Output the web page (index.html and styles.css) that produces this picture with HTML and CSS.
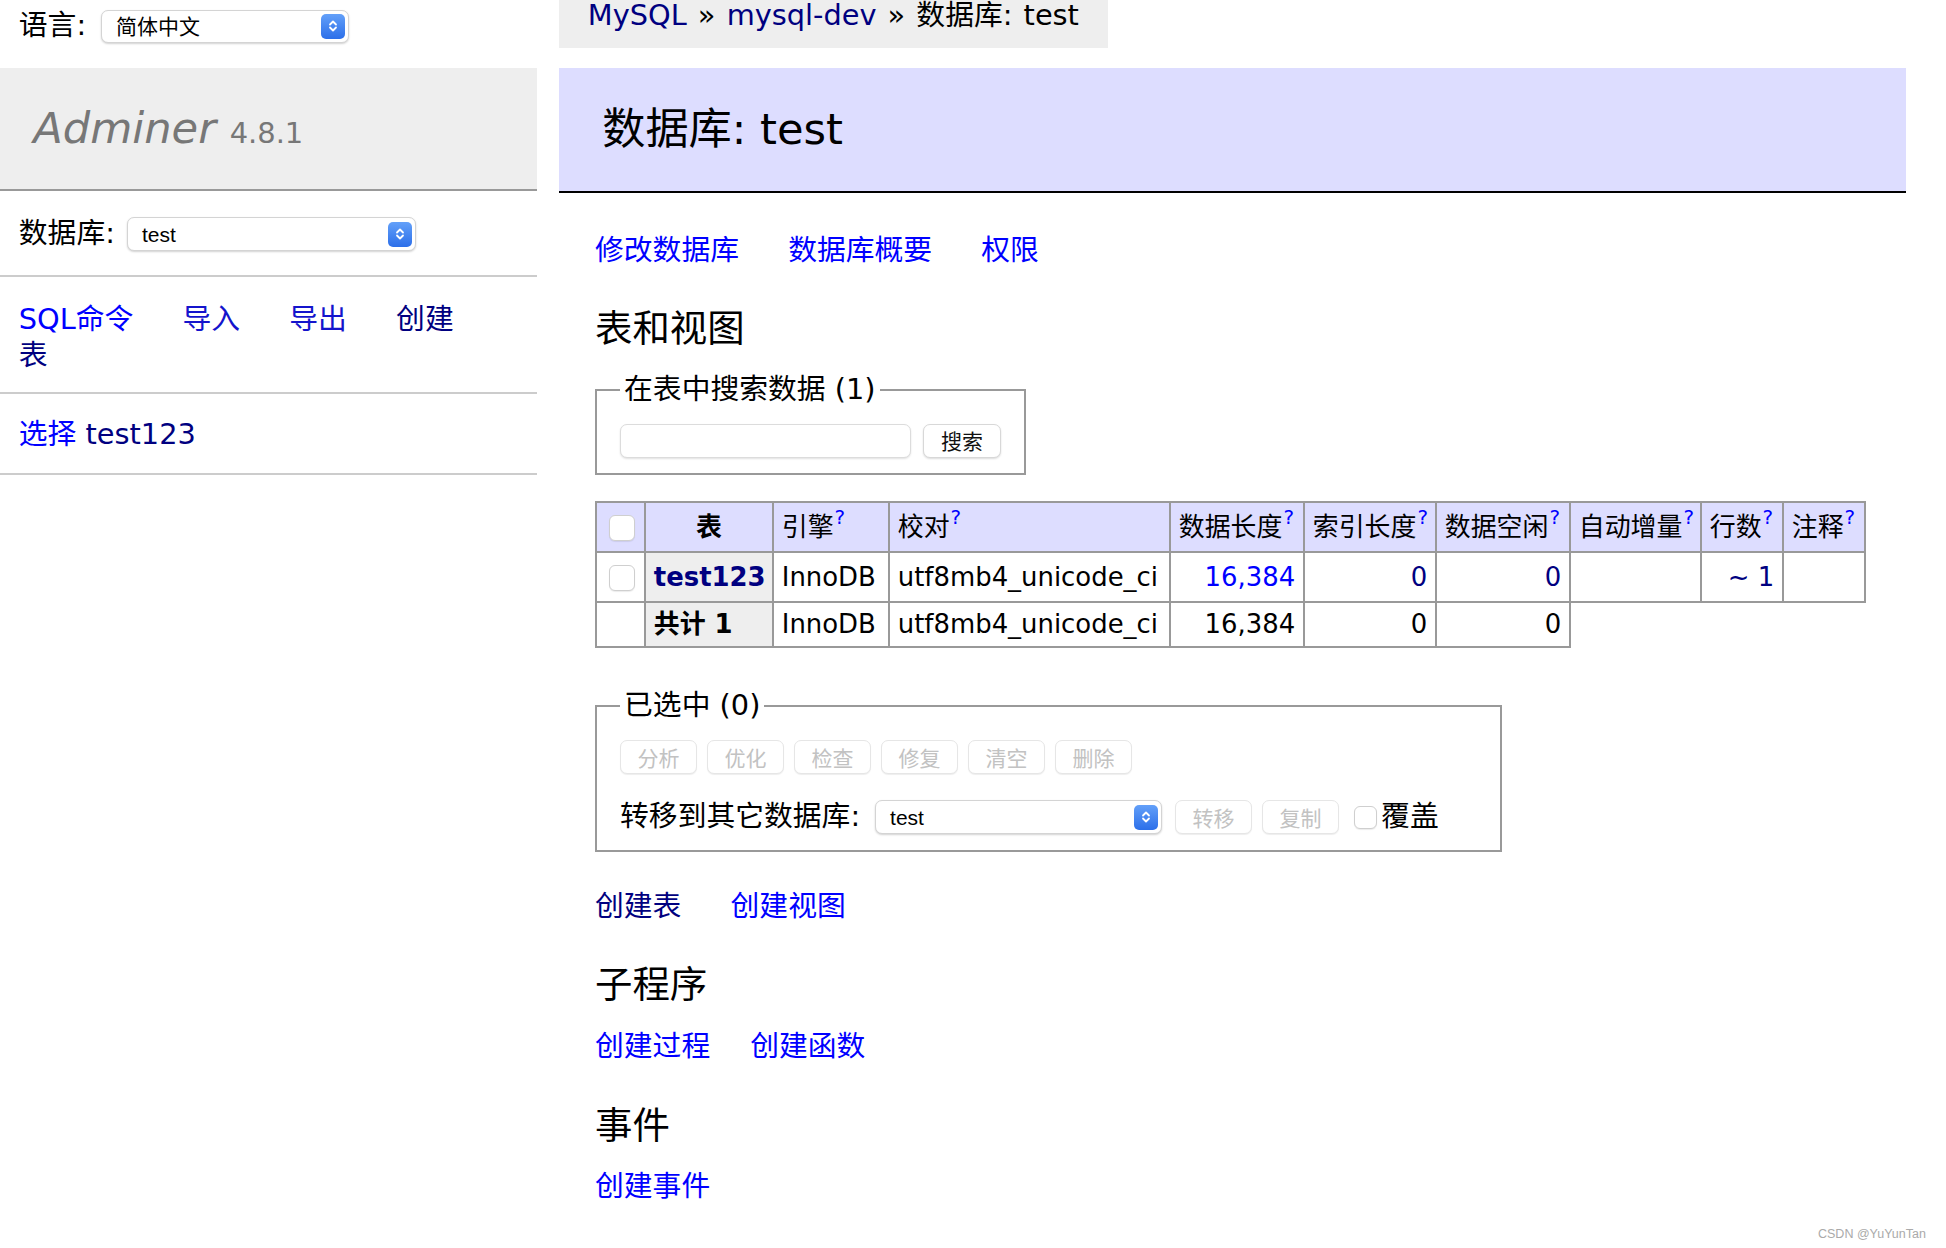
FILE: index.html
```html
<!DOCTYPE html>
<html lang="zh-CN">
<head>
<meta charset="utf-8">
<title>数据库: test - Adminer</title>
<link rel="stylesheet" href="styles.css">
</head>
<body>
<div class="page">
  <aside class="sidebar">
    <div class="lang">
      <span>语言:</span>
      <span class="select sel-lang"><span class="sel-text">简体中文</span><span class="sel-btn"><svg viewBox="0 0 12 16" width="12" height="16"><path d="M3 6.5 6 3.5 9 6.5M3 9.5 6 12.5 9 9.5" fill="none" stroke="#fff" stroke-width="1.8" stroke-linecap="round" stroke-linejoin="round"/></svg></span></span>
    </div>
    <h1><a class="logo" href="#">Adminer</a> <span class="version">4.8.1</span></h1>
    <p class="dbs">
      <span>数据库:</span>
      <span class="select sel-db"><span class="sel-text">test</span><span class="sel-btn"><svg viewBox="0 0 12 16" width="12" height="16"><path d="M3 6.5 6 3.5 9 6.5M3 9.5 6 12.5 9 9.5" fill="none" stroke="#fff" stroke-width="1.8" stroke-linecap="round" stroke-linejoin="round"/></svg></span></span>
    </p>
    <p class="menu-links"><a href="#">SQL命令</a> <a href="#" class="mid">导入</a> <a href="#" class="mid">导出</a> <a href="#" class="v">创建表</a></p>
    <ul class="tables"><li><a href="#">选择</a> <a href="#" class="v">test123</a></li></ul>
  </aside>

  <main class="main">
    <div class="crumbs"><div class="breadcrumb"><a href="#" class="v">MySQL</a> » <a href="#" class="v">mysql-dev</a> » 数据库: test</div></div>
    <h2>数据库: test</h2>
    <div class="content">
      <p class="links"><a href="#">修改数据库</a> <a href="#">数据库概要</a> <a href="#">权限</a></p>
      <h3>表和视图</h3>
      <form class="search-form">
        <fieldset class="search-set">
          <legend>在表中搜索数据 (1)</legend>
          <div class="search-row"><input type="search" class="search-input"><button type="button" class="btn">搜索</button></div>
        </fieldset>
      </form>

      <table class="tbl">
        <colgroup>
          <col style="width:49px"><col style="width:128px"><col style="width:116px"><col style="width:281px"><col style="width:134px"><col style="width:132px"><col style="width:134px"><col style="width:131px"><col style="width:82px"><col style="width:82px">
        </colgroup>
        <thead>
          <tr>
            <td><input type="checkbox" class="cb"></td>
            <th>表</th>
            <td>引擎<a href="#"><sup>?</sup></a></td>
            <td>校对<a href="#"><sup>?</sup></a></td>
            <td>数据长度<a href="#"><sup>?</sup></a></td>
            <td>索引长度<a href="#"><sup>?</sup></a></td>
            <td>数据空闲<a href="#"><sup>?</sup></a></td>
            <td>自动增量<a href="#"><sup>?</sup></a></td>
            <td>行数<a href="#"><sup>?</sup></a></td>
            <td>注释<a href="#"><sup>?</sup></a></td>
          </tr>
        </thead>
        <tbody>
          <tr class="r1">
            <td><input type="checkbox" class="cb"></td>
            <th><a href="#" class="v">test123</a></th>
            <td>InnoDB</td>
            <td>utf8mb4_unicode_ci</td>
            <td class="num"><a href="#">16,384</a></td>
            <td class="num"><a href="#" class="v">0</a></td>
            <td class="num"><a href="#" class="v">0</a></td>
            <td class="num"></td>
            <td class="num"><a href="#" class="v">~ 1</a></td>
            <td></td>
          </tr>
          <tr class="r2">
            <td></td>
            <th>共计 1</th>
            <td>InnoDB</td>
            <td>utf8mb4_unicode_ci</td>
            <td class="num">16,384</td>
            <td class="num">0</td>
            <td class="num">0</td>
          </tr>
        </tbody>
      </table>

      <div class="footer">
        <fieldset class="sel-set">
          <legend>已选中 (0)</legend>
          <div class="btn-row">
            <button type="button" class="btn" disabled>分析</button>
            <button type="button" class="btn" disabled>优化</button>
            <button type="button" class="btn" disabled>检查</button>
            <button type="button" class="btn" disabled>修复</button>
            <button type="button" class="btn" disabled>清空</button>
            <button type="button" class="btn" disabled>删除</button>
          </div>
          <p class="move-row">
            <span>转移到其它数据库:</span>
            <span class="select sel-move"><span class="sel-text">test</span><span class="sel-btn"><svg viewBox="0 0 12 16" width="12" height="16"><path d="M3 6.5 6 3.5 9 6.5M3 9.5 6 12.5 9 9.5" fill="none" stroke="#fff" stroke-width="1.8" stroke-linecap="round" stroke-linejoin="round"/></svg></span></span>
            <button type="button" class="btn mv" disabled>转移</button>
            <button type="button" class="btn cp" disabled>复制</button>
            <label class="ow"><input type="checkbox" class="cb cb-sm">覆盖</label>
          </p>
        </fieldset>
      </div>

      <p class="links"><a href="#" class="v">创建表</a> <a href="#">创建视图</a></p>
      <h3>子程序</h3>
      <p class="links after-h3"><a href="#">创建过程</a><a href="#">创建函数</a></p>
      <h3>事件</h3>
      <p class="links after-h3"><a href="#">创建事件</a></p>
    </div>
  </main>
</div>
<div class="watermark">CSDN @YuYunTan</div>
</body>
</html>
```

FILE: styles.css
```css
html, body {
  margin: 0;
  padding: 0;
  background: #fff;
}

body {
  color: #000;
  font: 28.8px/1.25 "DejaVu Sans", "Noto Sans CJK SC", sans-serif;
  position: relative;
  min-height: 1248px;
}

a {
  color: #00f;
  text-decoration: none;
}

a.v {
  color: #000080;
}

a.mid {
  color: #1414cc;
}

.page {
  display: flex;
  align-items: flex-start;
}

/* ---------- sidebar ---------- */
.sidebar {
  width: 537px;
  flex: none;
}

.lang {
  display: flex;
  align-items: center;
  gap: 15px;
  height: 52px;
  margin-bottom: 15.6px;
  padding-left: 18.8px;
}

h1 {
  margin: 0;
  padding: 33.5px 43.2px 33.5px 33.2px;
  font-size: 43.2px;
  line-height: 1.25;
  font-weight: normal;
  color: #777;
  background: #eee;
  border-bottom: 2px solid #999;
}

.logo {
  color: #777;
  font-style: italic;
}

.version {
  color: #777;
  font-size: 67%;
}

.dbs,
.menu-links,
.tables {
  margin: 0;
  padding: 22px 28.8px 22px 18.8px;
  border-bottom: 2px solid #ccc;
}

.dbs {
  display: flex;
  align-items: center;
  gap: 12px;
  min-height: 36px;
  padding-top: 25.5px;
  padding-bottom: 23px;
}

.menu-links {
  padding-top: 25px;
  padding-bottom: 18px;
}

.menu-links a {
  margin-right: 40px;
}

.tables {
  list-style: none;
  white-space: nowrap;
  padding-top: 23px;
  padding-bottom: 20px;
}

/* ---------- selects / controls ---------- */
.select {
  display: inline-flex;
  align-items: center;
  justify-content: space-between;
  box-sizing: border-box;
  height: 34px;
  padding: 0 3px 0 14px;
  background: #fff;
  border: 1px solid #d4d4d4;
  border-radius: 7px;
  box-shadow: 0 1px 2px rgba(0, 0, 0, 0.18);
  font: 21px/1 "Liberation Sans", "Noto Sans CJK SC", sans-serif;
  color: #000;
  flex: none;
}

.sel-lang { width: 248px; height: 33px; }
.sel-db { width: 289px; }
.sel-move { width: 287px; }

.sel-btn {
  display: flex;
  align-items: center;
  justify-content: center;
  width: 24px;
  height: 25px;
  border-radius: 5px;
  background: linear-gradient(#63a0f9, #2c6fe9);
}

.btn {
  box-sizing: border-box;
  width: 77px;
  height: 34px;
  padding: 0;
  background: #fff;
  border: 1px solid #d8d8d8;
  border-radius: 7px;
  box-shadow: 0 1px 2px rgba(0, 0, 0, 0.14);
  font: 21px/1 "Noto Sans CJK SC", sans-serif;
  color: #111;
}

.btn:disabled {
  color: #c2c2c2;
  border-color: #e6e6e6;
  box-shadow: 0 1px 1px rgba(0, 0, 0, 0.07);
}

.cb {
  -webkit-appearance: none;
  appearance: none;
  box-sizing: border-box;
  width: 26px;
  height: 26px;
  margin: 0 0 0 4px;
  background: #fff;
  border: 1px solid #cfcfcf;
  border-radius: 6px;
  box-shadow: 0 1px 1px rgba(0, 0, 0, 0.08);
  vertical-align: middle;
}

/* ---------- main ---------- */
.main {
  width: 1347px;
  margin-left: 22px;
  flex: none;
}

.crumbs {
  display: flex;
  height: 47.6px;
}

.breadcrumb {
  background: #eee;
  padding: 0 28.8px;
  line-height: 31.8px;
  white-space: nowrap;
  word-spacing: 2px;
}

h2 {
  margin: 20px 0 40px;
  padding: 34.56px 43.2px;
  font-size: 43.2px;
  line-height: 1.25;
  font-weight: normal;
  color: #000;
  background: #ddf;
  border-bottom: 2px solid #000;
}

.content {
  padding-left: 36px;
  padding-bottom: 20px;
}

p {
  margin: 23.04px 0 0;
}

.links a {
  white-space: nowrap;
  margin-right: 40px;
}

p.after-h3 {
  margin-top: 20px;
}

h3 {
  margin: 37.44px 0 0;
  font-size: 37.44px;
  line-height: 1.25;
  font-weight: normal;
}

fieldset {
  margin: 23.04px 14.4px 0 0;
  padding: 14.4px 23.04px;
  border: 2px solid #999;
  min-width: 0;
}

legend {
  padding: 0 4px;
}

.search-form {
  margin: 0;
}

.search-set {
  display: inline-block;
  vertical-align: top;
  margin-top: 19.5px;
}

.search-row {
  display: flex;
  align-items: center;
  gap: 12px;
  height: 36px;
}

.search-input {
  -webkit-appearance: none;
  appearance: none;
  box-sizing: border-box;
  width: 291px;
  height: 34px;
  margin: 0;
  background: #fff;
  border: 1px solid #dcdcdc;
  border-radius: 7px;
  box-shadow: 0 1px 2px rgba(0, 0, 0, 0.12);
}

.search-row .btn {
  width: 78px;
}

/* ---------- table ---------- */
.tbl {
  margin: 25.92px 0 0;
  width: 1269px;
  table-layout: fixed;
  border-collapse: collapse;
  font-size: 25.92px;
  line-height: 32.4px;
}

.tbl td,
.tbl th {
  border: 2px solid #999;
  padding: 5.18px 7.78px;
  white-space: nowrap;
  vertical-align: middle;
  text-align: left;
}

.tbl thead tr {
  height: 50px;
}

.tbl thead td,
.tbl thead th {
  background: #ddf;
  font-weight: normal;
}

.tbl thead th {
  text-align: center;
  font-weight: bold;
}

.tbl sup {
  font-size: 20px;
  line-height: 0;
  vertical-align: 12px;
  margin-left: 1px;
}

.tbl tbody th {
  background: #eee;
  font-weight: bold;
}

.tbl .r1 {
  height: 50px;
}

.tbl .r2 {
  height: 44px;
}

.tbl .num {
  text-align: right;
}

/* ---------- footer / selection ---------- */
.footer {
  margin-top: 40px;
  padding-bottom: 14.4px;
}

.sel-set {
  box-sizing: border-box;
  width: 907px;
}

.btn-row {
  display: flex;
  align-items: center;
  gap: 10px;
  height: 38px;
}

.move-row {
  display: flex;
  align-items: center;
  height: 36px;
}

.move-row .sel-move {
  margin-left: 15px;
}

.move-row .mv {
  margin-left: 13px;
}

.move-row .cp {
  margin-left: 10px;
}

.ow {
  display: flex;
  align-items: center;
  margin-left: 15px;
}

.cb-sm {
  width: 23px;
  height: 23px;
  margin: 0 4px 0 0;
}

.watermark {
  position: absolute;
  left: 1818px;
  top: 1226px;
  font: 12.5px/16px "Liberation Sans", Arial, sans-serif;
  color: #aaa;
}
```
